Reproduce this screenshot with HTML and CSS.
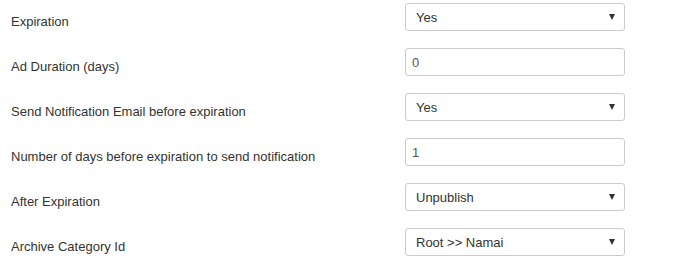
FILE: index.html
```html
<html lang="en">
<head>
    <title>Expiration settings</title>
    <link rel="stylesheet" href="styles.css">
</head>
<body>

<div class="form">
    <div class="row">
        <label>Expiration</label>
        <div class="field select"><span>Yes</span><i class="caret"></i></div>
    </div>
    <div class="row">
        <label>Ad Duration (days)</label>
        <div class="field input"><span>0</span></div>
    </div>
    <div class="row">
        <label>Send Notification Email before expiration</label>
        <div class="field select"><span>Yes</span><i class="caret"></i></div>
    </div>
    <div class="row">
        <label>Number of days before expiration to send notification</label>
        <div class="field input"><span>1</span></div>
    </div>
    <div class="row">
        <label>After Expiration</label>
        <div class="field select"><span>Unpublish</span><i class="caret"></i></div>
    </div>
    <div class="row">
        <label>Archive Category Id</label>
        <div class="field select"><span>Root &gt;&gt; Namai</span><i class="caret"></i></div>
    </div>
</div>

</body>
</html>
```

FILE: styles.css
```css
html {
    font-family: "Liberation Sans", Arial, sans-serif;
    font-size: 13px;
    color: #333;
}

body {
    margin: 0;
    background: #fff;
}

.form {
    padding: 3px 0 0 11px;
}

.row {
    display: grid;
    grid-template-columns: 394px 220px;
    height: 45px;
}

.row label {
    padding-top: 11px;
    line-height: 15px;
}

.field {
    box-sizing: border-box;
    height: 28px;
    border: 1px solid #ccc;
    border-radius: 3px;
    display: flex;
    align-items: center;
    justify-content: space-between;
}

.select {
    padding: 0 9px 0 10px;
}

.input {
    padding: 0 6px;
    color: #555;
}

.caret {
    width: 0;
    height: 0;
    border-left: 3px solid transparent;
    border-right: 3px solid transparent;
    border-top: 6px solid #333;
}
```
